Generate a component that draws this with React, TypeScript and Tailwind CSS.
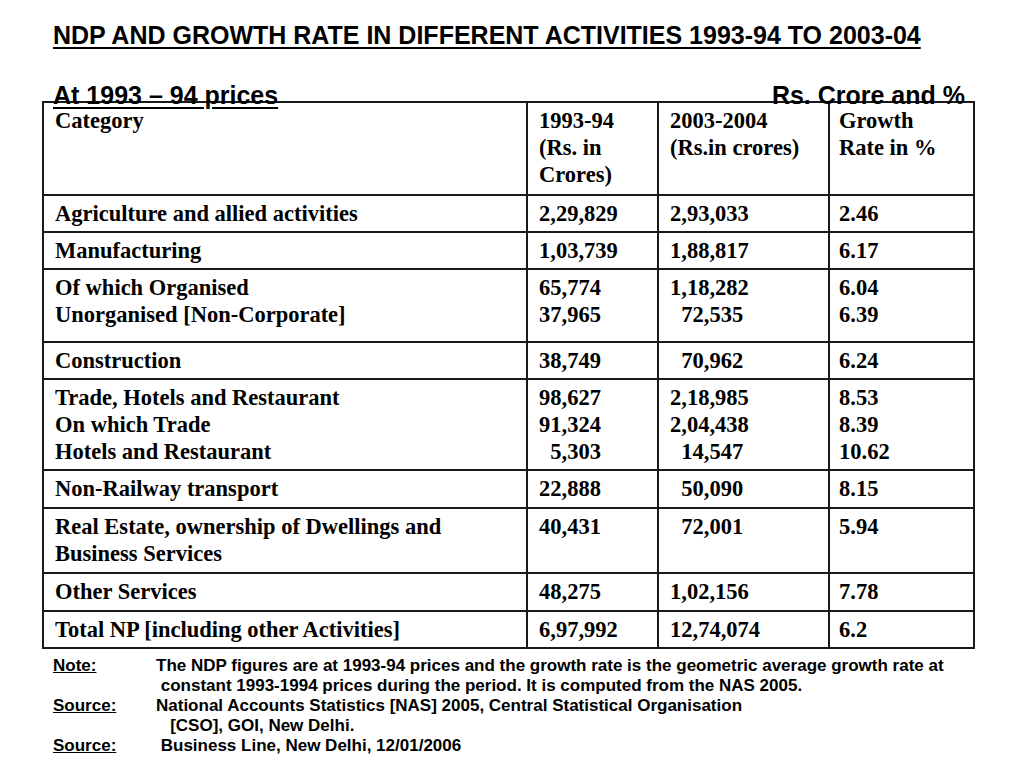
const rows: { h: number; cells: string[][] }[] = [
  { h: 93, cells: [["Category"], ["1993-94", "(Rs. in", "Crores)"], ["2003-2004", "(Rs.in crores)"], ["Growth", "Rate in %"]] },
  { h: 37, cells: [["Agriculture and allied activities"], ["2,29,829"], ["2,93,033"], ["2.46"]] },
  { h: 37, cells: [["Manufacturing"], ["1,03,739"], ["1,88,817"], ["6.17"]] },
  { h: 73, cells: [["Of which Organised", "Unorganised [Non-Corporate]"], ["65,774", "37,965"], ["1,18,282", "  72,535"], ["6.04", "6.39"]] },
  { h: 37, cells: [["Construction"], ["38,749"], ["  70,962"], ["6.24"]] },
  { h: 91, cells: [["Trade, Hotels and Restaurant", "On which Trade", "Hotels and Restaurant"], ["98,627", "91,324", "  5,303"], ["2,18,985", "2,04,438", "  14,547"], ["8.53", "8.39", "10.62"]] },
  { h: 38, cells: [["Non-Railway transport"], ["22,888"], ["  50,090"], ["8.15"]] },
  { h: 65, cells: [["Real Estate, ownership of Dwellings and", "Business Services"], ["40,431"], ["  72,001"], ["5.94"]] },
  { h: 38, cells: [["Other Services"], ["48,275"], ["1,02,156"], ["7.78"]] },
  { h: 37, cells: [["Total NP [including other Activities]"], ["6,97,992"], ["12,74,074"], ["6.2"]] },
];

const notes = [
  { label: "Note:", text: "The NDP figures are at 1993-94 prices and the growth rate is the geometric average growth rate at" },
  { label: "", text: " constant 1993-1994 prices during the period. It is computed from the NAS 2005." },
  { label: "Source:", text: "National Accounts Statistics [NAS] 2005, Central Statistical Organisation" },
  { label: "", text: "   [CSO], GOI, New Delhi." },
  { label: "Source:", text: " Business Line, New Delhi, 12/01/2006" },
];

export default function App() {
  return (
    <div className="w-[1024px] h-[768px] bg-white text-black overflow-hidden font-['Liberation_Sans',Arial,sans-serif]">
      <h1 className="pl-[53px] pt-[20px] text-[25px] leading-[30px] font-bold underline decoration-2 underline-offset-[3px]">
        NDP AND GROWTH RATE IN DIFFERENT ACTIVITIES 1993-94 TO 2003-04
      </h1>
      <div className="flex justify-between pl-[53px] pr-[59px] mt-[30px] -mb-[9px] relative z-10 text-[25px] leading-[30px] font-bold">
        <span className="underline decoration-2 underline-offset-[3px]">At 1993 – 94 prices</span>
        <span>Rs. Crore and %</span>
      </div>
      <table className="ml-[42px] w-[931px] table-fixed border-collapse font-['Liberation_Serif','Times_New_Roman',serif] font-bold text-[22.5px] leading-[27px]">
        <colgroup>
          <col className="w-[484px]" />
          <col className="w-[131px]" />
          <col className="w-[171px]" />
          <col className="w-[145px]" />
        </colgroup>
        <tbody>
          {rows.map((r, i) => (
            <tr key={i} style={{ height: r.h }}>
              {r.cells.map((c, j) => (
                <td
                  key={j}
                  className={`border-2 border-[#1a1a1a] align-top pt-[4px] pb-0 whitespace-pre ${j === 3 ? "pl-[9px]" : "pl-[11px]"}`}
                >
                  {c.map((line, k) => (
                    <div key={k}>{line}</div>
                  ))}
                </td>
              ))}
            </tr>
          ))}
        </tbody>
      </table>
      <div className="pl-[53px] pt-[7px] text-[17px] leading-[20px] font-bold">
        {notes.map((n, i) => (
          <div key={i} className="flex">
            <span className="w-[103px] shrink-0 underline">{n.label}</span>
            <span className="whitespace-pre">{n.text}</span>
          </div>
        ))}
      </div>
    </div>
  );
}
